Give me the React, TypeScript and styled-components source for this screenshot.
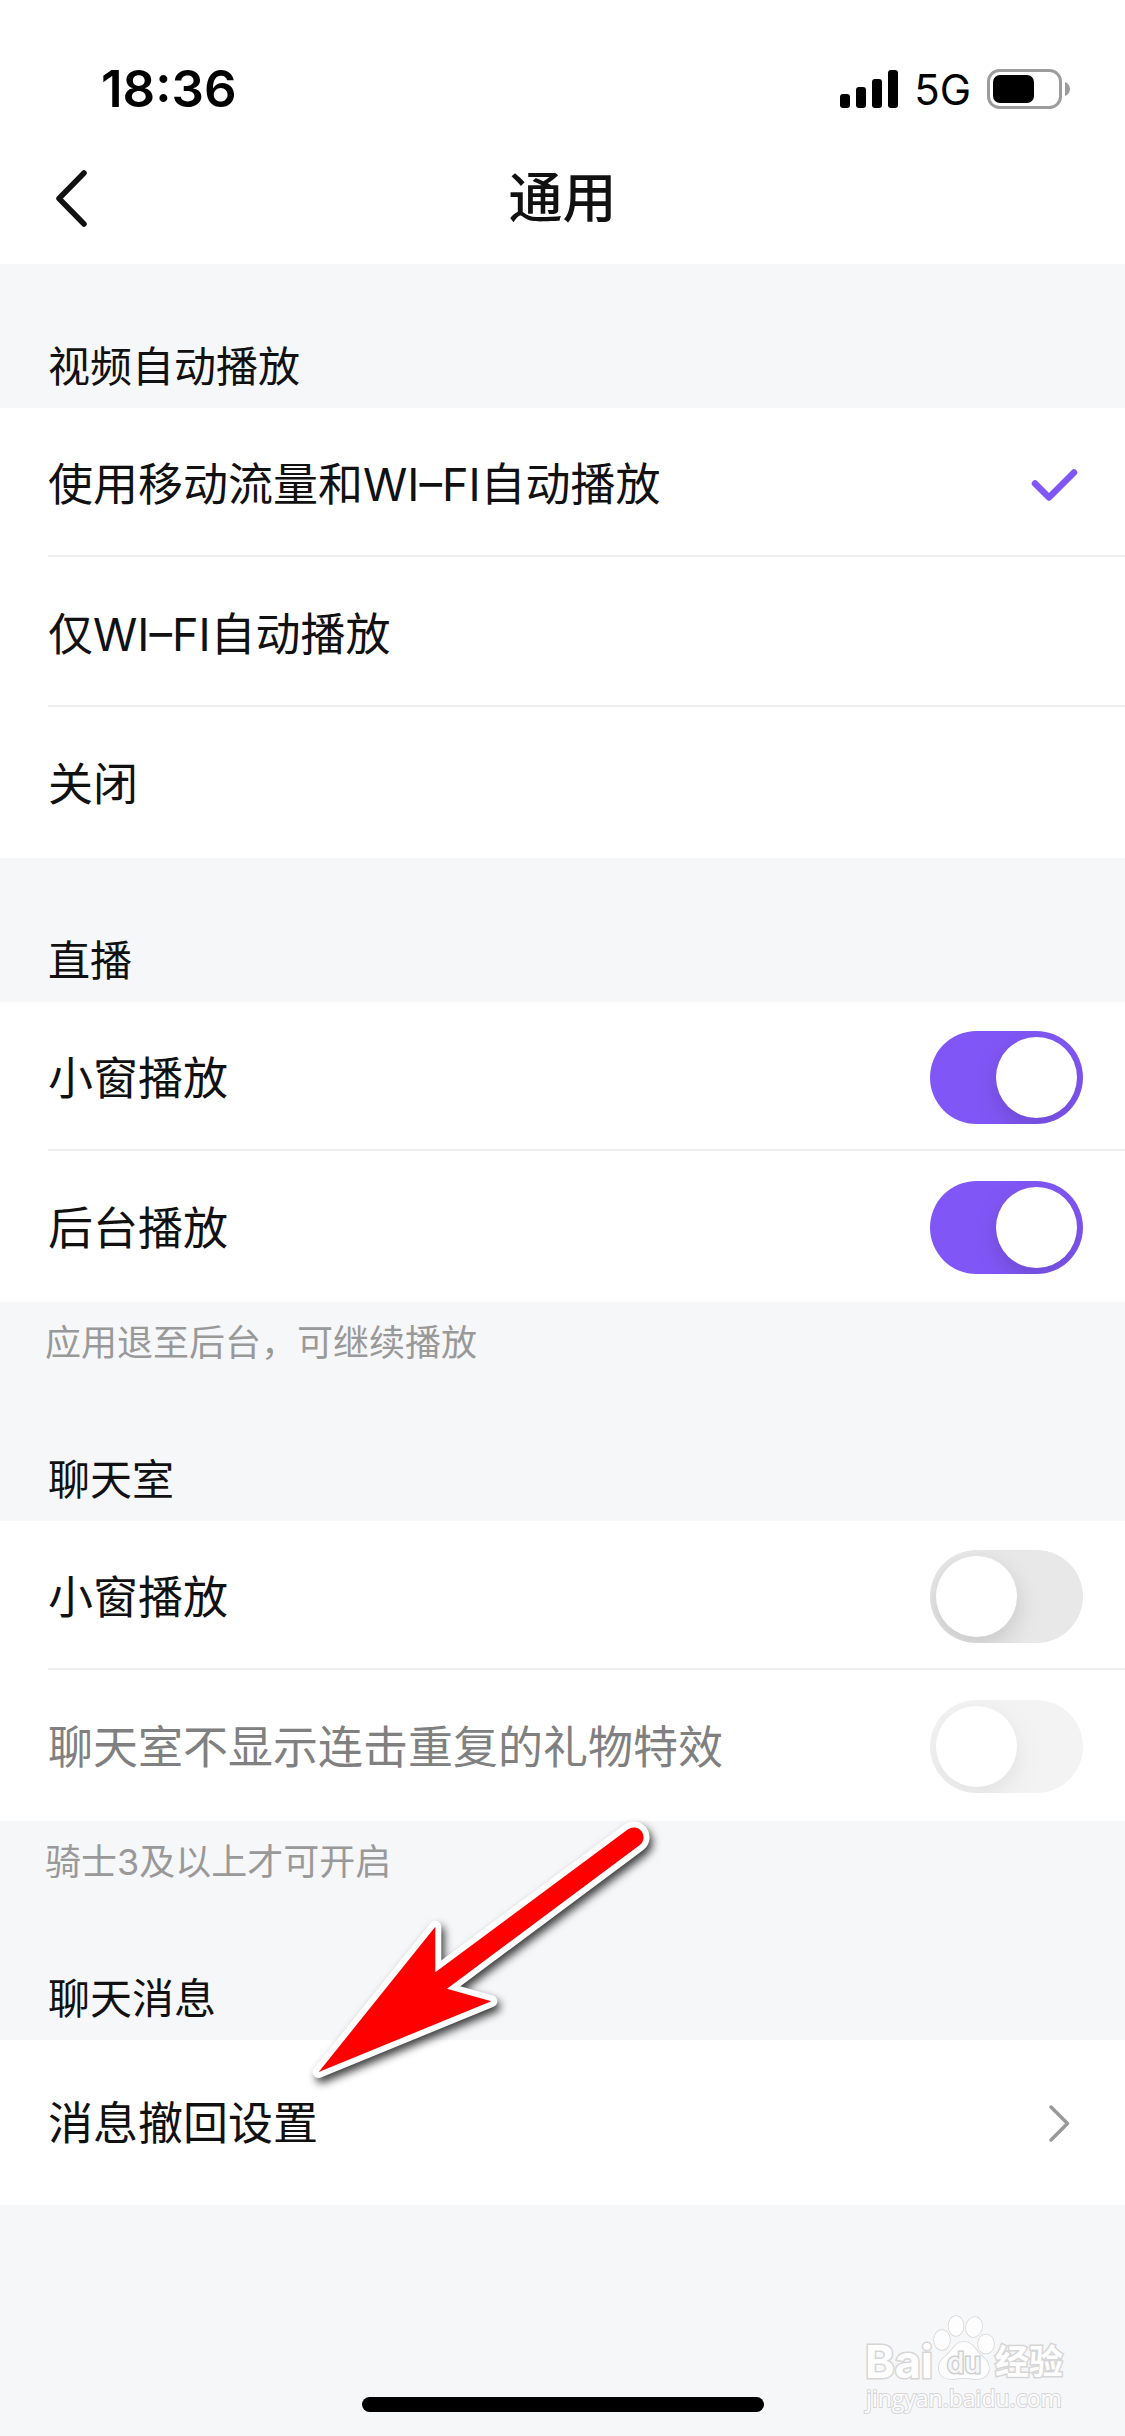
import { useState, type ReactNode } from "react";
import styled, { createGlobalStyle } from "styled-components";

const color = {
  ink: "#111111",
  muted: "#808080",
  note: "#999999",
  page: "#f6f7f9",
  surface: "#ffffff",
  line: "#eeeeee",
  accent: "#8057f6",
  track: "#e8e8e8",
};

const GlobalStyle = createGlobalStyle`
  *, *::before, *::after { box-sizing: border-box; }
  body {
    margin: 0;
    background: ${color.page};
    color: ${color.ink};
    font-family: Inter, "Noto Sans CJK SC", sans-serif;
  }
`;

const Screen = styled.div`
  position: relative;
  display: flex;
  flex-direction: column;
  min-height: 100vh;
  background: ${color.page};
`;

const TopArea = styled.header`
  background: ${color.surface};
`;

const StatusBar = styled.div`
  display: flex;
  align-items: center;
  justify-content: space-between;
  height: 132px;
  padding: 45px 55px 0 101px;
  color: #000;
`;

const Clock = styled.time`
  font-size: 51px;
  line-height: 60px;
  font-weight: 600;
`;

const StatusIcons = styled.div`
  display: flex;
  align-items: center;
  gap: 16px;
`;

const Network = styled.span`
  padding-top: 3px;
  font-size: 42px;
  line-height: 48px;
  font-weight: 400;
`;

const NavBar = styled.nav`
  display: grid;
  grid-template-columns: 1fr auto 1fr;
  align-items: center;
  height: 132px;
  padding: 0 48px;
`;

const BackButton = styled.button`
  display: flex;
  justify-self: start;
  padding: 0;
  border: 0;
  background: none;
  color: inherit;
  cursor: pointer;
`;

const Title = styled.h1`
  margin: 0;
  padding-top: 2px;
  font-size: 54px;
  line-height: 78px;
  font-weight: 500;
`;

const Group = styled.section`
  display: flex;
  flex-direction: column;
`;

const GroupTitle = styled.h2`
  margin: 0;
  padding: 73px 48px 11px;
  font-size: 42px;
  line-height: 60px;
  font-weight: 400;
`;

const Note = styled.p`
  margin: 0;
  padding: 14px 45px 7px;
  color: ${color.note};
  font-size: 36px;
  line-height: 54px;
`;

const Rows = styled.div`
  display: flex;
  flex-direction: column;
  background: ${color.surface};
`;

const Row = styled.label<{ $disabled?: boolean }>`
  position: relative;
  display: flex;
  align-items: center;
  justify-content: space-between;
  height: 149px;
  margin: 0 0 1px 48px;
  padding: 4px 42px 0 0;
  border-bottom: 2px solid ${color.line};
  color: ${(p) => (p.$disabled ? color.muted : "inherit")};
  font-size: 45px;
  line-height: 66px;
  cursor: ${(p) => (p.$disabled ? "default" : "pointer")};

  &:last-child {
    border-color: transparent;
  }
`;

const RowText = styled.span`
  padding-top: 3px;
`;

const LinkRow = styled.a`
  display: flex;
  align-items: center;
  justify-content: space-between;
  height: 165px;
  padding: 0 48px;
  color: inherit;
  font-size: 45px;
  line-height: 66px;
  text-decoration: none;
`;

const Radio = styled.input`
  position: absolute;
  inset: 0;
  margin: 0;
  opacity: 0;
  cursor: pointer;

  & + svg {
    visibility: hidden;
  }
  &:checked + svg {
    visibility: visible;
  }
`;

const Switch = styled.input`
  appearance: none;
  display: flex;
  flex: none;
  justify-content: flex-start;
  width: 153px;
  height: 93px;
  margin: 0;
  padding: 6px;
  border-radius: 47px;
  background: ${color.track};
  overflow: hidden;
  cursor: inherit;

  &::before {
    content: "";
    width: 81px;
    height: 81px;
    border-radius: 50%;
    background: #fff;
    box-shadow: 0 9px 24px rgba(0, 0, 0, 0.15);
  }
  &:checked {
    justify-content: flex-end;
    background: ${color.accent};
  }
  &:disabled {
    opacity: 0.5;
  }
`;

const BottomArea = styled.footer`
  display: flex;
  justify-content: center;
  margin-top: auto;
  padding-bottom: 24px;
`;

const HomeIndicator = styled.div`
  width: 402px;
  height: 15px;
  border-radius: 8px;
  background: #000;
`;

const Pointer = styled.svg`
  position: absolute;
  left: 300px;
  top: 1810px;
  pointer-events: none;
  filter: drop-shadow(3px 5px 4px rgba(0, 0, 0, 0.75));
`;

const Watermark = styled.div`
  position: absolute;
  right: 62px;
  bottom: 24px;
  display: flex;
  flex-direction: column;
  align-items: center;
  color: #fdfdfd;
  -webkit-text-stroke: 3px #d6d6d6;
  paint-order: stroke fill;
  pointer-events: none;
`;

const Brand = styled.div`
  display: flex;
  align-items: flex-end;
`;

const BrandLatin = styled.span`
  font-size: 45px;
  line-height: 44px;
  font-weight: 700;
`;

const BrandHan = styled.span`
  font-size: 34px;
  line-height: 44px;
  font-weight: 700;
`;

const Site = styled.span`
  font-family: "Open Sans", sans-serif;
  font-size: 23px;
  line-height: 28px;
  -webkit-text-stroke-width: 2px;
`;

function SignalIcon() {
  return (
    <svg width="58" height="38" viewBox="0 0 58 38" aria-hidden="true">
      <rect x="0" y="24" width="10" height="14" rx="3" />
      <rect x="16" y="17" width="10" height="21" rx="3" />
      <rect x="32" y="9" width="10" height="29" rx="3" />
      <rect x="48" y="0" width="10" height="38" rx="3" />
    </svg>
  );
}

function BatteryIcon() {
  return (
    <svg width="83" height="40" viewBox="0 0 83 40" aria-hidden="true">
      <rect x="1.5" y="1.5" width="72" height="37" rx="11" fill="none" stroke="#9c9c9c" strokeWidth="3" />
      <rect x="6" y="6" width="41" height="28" rx="7" />
      <path d="M78 13c3 1 5 4 5 7s-2 6-5 7z" fill="#9c9c9c" />
    </svg>
  );
}

function BackIcon() {
  return (
    <svg width="48" height="60" viewBox="0 0 48 60" fill="none" aria-hidden="true">
      <path d="M36 5L11 30.500l25 25.500" stroke="currentColor" strokeWidth="5.500" strokeLinecap="round" strokeLinejoin="round" />
    </svg>
  );
}

function CheckIcon() {
  return (
    <svg width="54" height="42" viewBox="0 0 54 42" fill="none" aria-hidden="true">
      <path d="M6 20.500l14 14L45 9.500" stroke={color.accent} strokeWidth="6.500" strokeLinecap="round" strokeLinejoin="round" />
    </svg>
  );
}

function ForwardIcon() {
  return (
    <svg width="30" height="42" viewBox="0 0 30 42" fill="none" aria-hidden="true">
      <path d="M4 5l16.500 16.500L4 38" stroke={color.note} strokeWidth="3.500" strokeLinecap="round" strokeLinejoin="round" />
    </svg>
  );
}

function PawIcon() {
  return (
    <svg width="62" height="70" viewBox="0 0 62 70" aria-hidden="true">
      <g fill="#fdfdfd" stroke="#d6d6d6" strokeWidth="1.500">
        <ellipse cx="9" cy="26" rx="8" ry="10" />
        <ellipse cx="23" cy="12" rx="7.500" ry="10" />
        <ellipse cx="41" cy="13" rx="8" ry="10" transform="rotate(14 41 13)" />
        <ellipse cx="53" cy="30" rx="8" ry="9.500" />
        <path d="M31 28c-9 0-11 8-17 13-5 4-9 8-8 15 1 6 6 9 12 9 5 0 8-1 13-1s8 1 13 1c7 0 12-4 12-11 0-6-4-9-8-13-6-5-8-13-17-13z" />
      </g>
      <text
        x="31"
        y="59"
        textAnchor="middle"
        fontFamily="Inter, sans-serif"
        fontSize="28"
        fontWeight="500"
        fill="#f6f7f9"
        stroke="#cfcfcf"
        strokeWidth="3"
        paintOrder="stroke"
      >
        du
      </text>
    </svg>
  );
}

function SwitchRow({
  label,
  initial = false,
  disabled = false,
}: {
  label: string;
  initial?: boolean;
  disabled?: boolean;
}) {
  const [on, setOn] = useState(initial);
  return (
    <Row $disabled={disabled}>
      <RowText>{label}</RowText>
      <Switch
        type="checkbox"
        role="switch"
        checked={on}
        disabled={disabled}
        onChange={(e) => setOn(e.target.checked)}
      />
    </Row>
  );
}

function SettingsGroup({ title, note, children }: { title: string; note?: string; children: ReactNode }) {
  return (
    <Group aria-label={title}>
      <GroupTitle>{title}</GroupTitle>
      <Rows>{children}</Rows>
      {note && <Note>{note}</Note>}
    </Group>
  );
}

const autoplayOptions = ["使用移动流量和WI–FI自动播放", "仅WI–FI自动播放", "关闭"];

export default function App() {
  const [autoplay, setAutoplay] = useState(0);

  return (
    <Screen lang="zh-CN">
      <GlobalStyle />
      <TopArea>
        <StatusBar>
          <Clock>18:36</Clock>
          <StatusIcons>
            <SignalIcon />
            <Network>5G</Network>
            <BatteryIcon />
          </StatusIcons>
        </StatusBar>
        <NavBar>
          <BackButton type="button" aria-label="返回">
            <BackIcon />
          </BackButton>
          <Title>通用</Title>
        </NavBar>
      </TopArea>

      <main>
        <SettingsGroup title="视频自动播放">
          {autoplayOptions.map((option, index) => (
            <Row key={option}>
              <RowText>{option}</RowText>
              <Radio
                type="radio"
                name="autoplay"
                checked={autoplay === index}
                onChange={() => setAutoplay(index)}
              />
              <CheckIcon />
            </Row>
          ))}
        </SettingsGroup>

        <SettingsGroup title="直播" note="应用退至后台，可继续播放">
          <SwitchRow label="小窗播放" initial />
          <SwitchRow label="后台播放" initial />
        </SettingsGroup>

        <SettingsGroup title="聊天室" note="骑士3及以上才可开启">
          <SwitchRow label="小窗播放" />
          <SwitchRow label="聊天室不显示连击重复的礼物特效" disabled />
        </SettingsGroup>

        <SettingsGroup title="聊天消息">
          <LinkRow href="#recall">
            <RowText>消息撤回设置</RowText>
            <ForwardIcon />
          </LinkRow>
        </SettingsGroup>
      </main>

      <BottomArea>
        <HomeIndicator />
      </BottomArea>

      <Pointer width="370" height="290" viewBox="300 1810 370 290" aria-hidden="true">
        <path
          d="M318.700 2072L435.300 1926.700V1972.300L628 1829.300A9.800 9.800 0 0 1 639.500 1845.300L447 1988.700L491.300 2001.300Z"
          fill="#f00"
          stroke="#fff"
          strokeWidth="12"
          strokeLinejoin="round"
          paintOrder="stroke"
        />
      </Pointer>

      <Watermark>
        <Brand>
          <BrandLatin>Bai</BrandLatin>
          <PawIcon />
          <BrandHan>经验</BrandHan>
        </Brand>
        <Site>jingyan.baidu.com</Site>
      </Watermark>
    </Screen>
  );
}
